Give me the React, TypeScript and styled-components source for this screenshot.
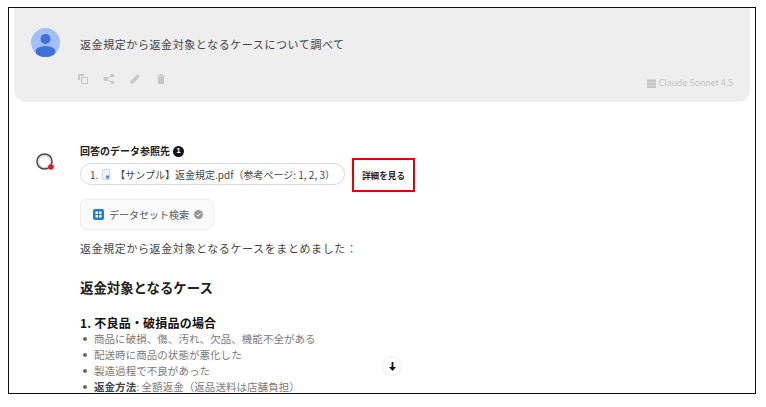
import React from 'react';
import styled, { createGlobalStyle } from 'styled-components';

const GlobalStyle = createGlobalStyle`
  html, body {
    margin: 0;
    padding: 0;
    background: #fff;
    overflow: hidden;
    font-family: "Noto Sans CJK JP", "Noto Sans", sans-serif;
  }
`;

const Frame = styled.div`
  position: relative;
  box-sizing: border-box;
  width: 748px;
  height: 387px;
  margin: 7px 0 0 8px;
  border: 1px solid #111;
  overflow: hidden;
  background: #fff;
`;

const QuestionCard = styled.section`
  box-sizing: border-box;
  height: 94px;
  margin: 0 5px;
  padding: 20px 17px 0;
  background: #eeeeee;
  border-radius: 0 0 12px 12px;
`;

const QuestionRow = styled.div`
  display: flex;
  align-items: center;
  gap: 20px;
`;

const Avatar = styled.svg`
  width: 29px;
  height: 29px;
  flex: none;
`;

const QuestionText = styled.p`
  margin: 2px 0 0;
  font-size: 11px;
  line-height: 16px;
  letter-spacing: 0.58px;
  color: #444;
`;

const CardFooter = styled.div`
  display: flex;
  align-items: flex-start;
  justify-content: space-between;
  margin: 16px 0 0 46px;
`;

const ActionIcons = styled.div`
  display: flex;
  align-items: center;
  gap: 14px;
  color: #c6c6c6;
`;

const ActionIcon = styled.svg`
  width: 12px;
  height: 12px;
  fill: currentColor;
`;

const ModelTag = styled.div`
  display: flex;
  align-items: center;
  gap: 3px;
  margin: 4px 0 0 0;
  font-size: 8.8px;
  line-height: 12px;
  color: #c4c4c4;
`;

const ModelIcon = styled.svg`
  width: 9px;
  height: 9px;
  fill: currentColor;
`;

const Answer = styled.section`
  display: flex;
  gap: 26px;
  padding: 42px 0 0 27px;
`;

const LogoSlot = styled.svg`
  width: 18px;
  height: 18px;
  flex: none;
  margin-top: 9px;
`;

const AnswerBody = styled.div`
  flex: 1;
  min-width: 0;
`;

const SourceTitle = styled.div`
  display: flex;
  align-items: center;
  gap: 3px;
  font-size: 10px;
  line-height: 14px;
  font-weight: 700;
  color: #222;
`;

const CountBadge = styled.span`
  display: inline-flex;
  align-items: center;
  justify-content: center;
  width: 11px;
  height: 11px;
  border-radius: 50%;
  background: #111;
  color: #fff;
  font-family: "Liberation Sans", sans-serif;
  font-size: 8px;
  font-weight: 700;
`;

const SourceRow = styled.div`
  display: flex;
  align-items: flex-start;
  gap: 7px;
`;

const SourcePill = styled.div`
  box-sizing: border-box;
  display: flex;
  align-items: center;
  width: 265px;
  height: 22px;
  margin-top: 5px;
  padding: 0 9px;
  border: 1px solid #d9d9d9;
  border-radius: 11px;
  font-size: 10px;
  color: #444;
  white-space: nowrap;
`;

const FileIcon = styled.svg`
  width: 8px;
  height: 11px;
  margin: 0 5px 0 4px;
  flex: none;
`;

const DetailButton = styled.button`
  box-sizing: border-box;
  width: 63px;
  height: 34px;
  padding: 0;
  background: #fff;
  border: 2px solid #e60000;
  font-family: inherit;
  font-size: 8.6px;
  font-weight: 700;
  color: #222;
`;

const ToolChip = styled.div`
  box-sizing: border-box;
  display: inline-flex;
  align-items: center;
  gap: 5px;
  width: 134px;
  height: 31px;
  margin-top: 7px;
  padding-left: 12px;
  background: #fafafa;
  border: 1px solid #eeeeee;
  border-radius: 6px;
  font-size: 10px;
  color: #555;
`;

const ToolIcon = styled.svg`
  width: 11px;
  height: 11px;
  flex: none;
`;

const CheckIcon = styled.svg`
  width: 9px;
  height: 9px;
  flex: none;
`;

const Paragraph = styled.p`
  margin: 8px 0 0;
  font-size: 11px;
  line-height: 20px;
  letter-spacing: 0.6px;
  color: #444;
`;

const Colon = styled.span`
  color: #2b6cb0;
`;

const SectionTitle = styled.h2`
  margin: 19px 0 0;
  font-size: 13.4px;
  line-height: 20px;
  font-weight: 700;
  color: #222;
`;

const CaseTitle = styled.h3`
  margin: 17px 0 0;
  font-size: 12px;
  line-height: 17px;
  letter-spacing: 0.2px;
  font-weight: 700;
  color: #111;
`;

const CaseList = styled.ul`
  margin: 0;
  padding: 0 0 0 14px;
  list-style: none;
`;

const CaseItem = styled.li`
  position: relative;
  font-size: 10.5px;
  line-height: 16px;
  letter-spacing: 0.05px;
  color: #7a7a7a;
  white-space: nowrap;

  &::before {
    content: '';
    position: absolute;
    left: -11px;
    top: 6px;
    width: 4px;
    height: 4px;
    border-radius: 50%;
    background: #666;
  }
`;

const ItemLabel = styled.strong`
  font-weight: 700;
  color: #444;
`;

const ScrollButton = styled.button`
  position: absolute;
  left: 373px;
  top: 348px;
  display: flex;
  align-items: center;
  justify-content: center;
  width: 20px;
  height: 20px;
  padding: 0;
  background: #fff;
  border: 1px solid #eeeeee;
  border-radius: 50%;
`;

const ArrowIcon = styled.svg`
  width: 9px;
  height: 9px;
  fill: #111;
`;

const cases = ['商品に破損、傷、汚れ、欠品、機能不全がある', '配送時に商品の状態が悪化した', '製造過程で不良があった'];

const App: React.FC = () => {
  return (
    <>
      <GlobalStyle />
      <Frame>
        <QuestionCard>
          <QuestionRow>
            <Avatar viewBox="0 0 29 29">
              <circle cx="14.5" cy="14.5" r="14.5" fill="#a3bffa" />
              <circle cx="14.5" cy="11" r="5" fill="#3f6fd8" />
              <ellipse cx="14.5" cy="23.5" rx="10" ry="5.5" fill="#3f6fd8" />
            </Avatar>
            <QuestionText>返金規定から返金対象となるケースについて調べて</QuestionText>
          </QuestionRow>
          <CardFooter>
            <ActionIcons>
              <ActionIcon viewBox="0 0 12 12">
                <path d="M1 1h6v2H3v4H1z" />
                <path d="M4 4h7v7H4zM5 5v5h5V5z" fillRule="evenodd" />
              </ActionIcon>
              <ActionIcon viewBox="0 0 12 12">
                <circle cx="2.5" cy="6" r="2.2" />
                <circle cx="9.5" cy="2.5" r="1.8" />
                <circle cx="9.5" cy="9.5" r="1.8" />
                <path d="M2.5 6l7-3.5M2.5 6l7 3.5" stroke="currentColor" strokeWidth="1" />
              </ActionIcon>
              <ActionIcon viewBox="0 0 12 12">
                <path d="M1 11l.6-3L8.5 1.2l2.3 2.3L4 10.4z" />
              </ActionIcon>
              <ActionIcon viewBox="0 0 12 12">
                <path d="M2 2.5h8v1H2zM4.5 1h3v1.5h-3zM3 4h6v7H3z" />
              </ActionIcon>
            </ActionIcons>
            <ModelTag>
              <ModelIcon viewBox="0 0 9 9">
                <path d="M0 .5h9v2.5H0zM0 3.5h9V6H0zM0 6.5h9V9H0z" />
              </ModelIcon>
              Claude Sonnet 4.5
            </ModelTag>
          </CardFooter>
        </QuestionCard>

        <Answer>
          <LogoSlot viewBox="0 0 18 18">
            <circle cx="8.5" cy="8.5" r="7.6" fill="none" stroke="#4a4a4a" strokeWidth="1.5" />
            <circle cx="8.5" cy="8.5" r="6" fill="none" stroke="#c4c4c4" strokeWidth="1" />
            <circle cx="15" cy="14" r="2.8" fill="#e8171f" />
          </LogoSlot>
          <AnswerBody>
            <SourceTitle>
              回答のデータ参照先
              <CountBadge>1</CountBadge>
            </SourceTitle>
            <SourceRow>
              <SourcePill>
                1.
                <FileIcon viewBox="0 0 8 11">
                  <path d="M.5.5h7v10h-7z" fill="#eef3fc" stroke="#c9d6ee" />
                  <rect x="4" y="6.5" width="3" height="3" fill="#5b86e5" />
                </FileIcon>
                【サンプル】返金規定.pdf（参考ページ: 1, 2, 3）
              </SourcePill>
              <DetailButton>詳細を見る</DetailButton>
            </SourceRow>
            <ToolChip>
              <ToolIcon viewBox="0 0 11 11">
                <rect width="11" height="11" rx="2" fill="#1f7ae0" />
                <path d="M2.5 2.5h2.5v2.5H2.5zM6 2.5h2.5v2.5H6zM2.5 6h2.5v2.5H2.5zM6 6h2.5v2.5H6z" fill="#fff" />
              </ToolIcon>
              データセット検索
              <CheckIcon viewBox="0 0 9 9">
                <circle cx="4.5" cy="4.5" r="4.5" fill="#999" />
                <path d="M2.5 4.6l1.5 1.4 2.6-2.8" fill="none" stroke="#fff" strokeWidth="1" />
              </CheckIcon>
            </ToolChip>
            <Paragraph>
              返金規定から返金対象となるケースをまとめました<Colon>：</Colon>
            </Paragraph>
            <SectionTitle>返金対象となるケース</SectionTitle>
            <CaseTitle>1. 不良品・破損品の場合</CaseTitle>
            <CaseList>
              {cases.map((text) => (
                <CaseItem key={text}>{text}</CaseItem>
              ))}
              <CaseItem>
                <ItemLabel>返金方法</ItemLabel>: 全額返金（返品送料は店舗負担）
              </CaseItem>
            </CaseList>
          </AnswerBody>
        </Answer>

        <ScrollButton aria-label="scroll down">
          <ArrowIcon viewBox="0 0 9 9">
            <path d="M3.6 0h1.8v5H8L4.5 9 1 5h2.6z" />
          </ArrowIcon>
        </ScrollButton>
      </Frame>
    </>
  );
};

export default App;
